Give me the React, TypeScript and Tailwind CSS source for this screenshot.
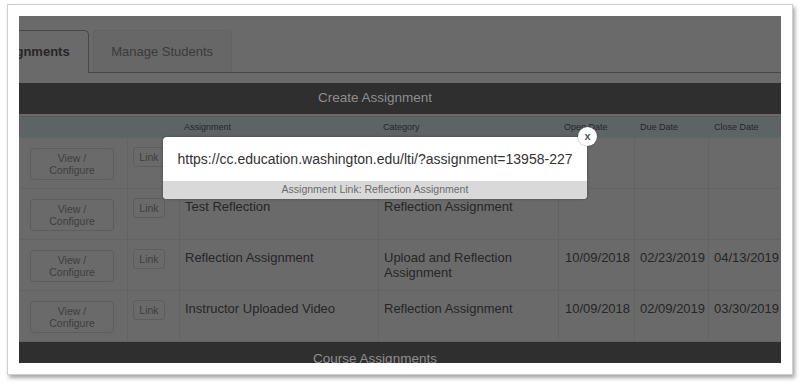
const rows = [
  { title: "", category: "", open: "", due: "", close: "" },
  { title: "Test Reflection", category: "Reflection Assignment", open: "", due: "", close: "" },
  {
    title: "Reflection Assignment",
    category: "Upload and Reflection Assignment",
    open: "10/09/2018",
    due: "02/23/2019",
    close: "04/13/2019",
  },
  {
    title: "Instructor Uploaded Video",
    category: "Reflection Assignment",
    open: "10/09/2018",
    due: "02/09/2019",
    close: "03/30/2019",
  },
];

const cols = "grid grid-cols-[109px_52px_199px_180px_76px_74px_1fr]";

export default function App() {
  return (
    <div className="w-[800px] h-[386px] bg-white overflow-hidden font-['Liberation_Sans',Arial,sans-serif]">
      <div className="ml-[7px] mt-[4px] w-[786px] h-[371px] border border-[#cfcfcf] bg-white p-[11px] shadow-[2px_3px_4px_rgba(0,0,0,0.35)]">
        <div className="relative w-[762px] h-[347px] overflow-hidden bg-[#6a6a6a]">
          {/* tabs */}
          <div className="flex items-end pt-[13px] border-b border-[#474747] h-[57px]">
            <div className="ml-[-50px] h-[43px] mb-[-1px] px-[18px] flex items-center bg-[#6a6a6a] border border-b-0 border-[#474747] rounded-tr-[5px] text-[13px] font-bold text-[#262626]">
              Assignments
            </div>
            <div className="ml-[4px] w-[139px] h-[42px] flex items-center justify-center bg-[#676767] border border-b-0 border-[#626262] rounded-t-[4px] text-[13px] text-[#3b3b3b]">
              Manage Students
            </div>
          </div>

          {/* create bar */}
          <div className="mt-[10px] h-[31px] pr-[50px] bg-[#2f2f2f] flex items-center justify-center text-[13.5px] text-[#8e8e8e]">
            Create Assignment
          </div>

          {/* table header */}
          <div className={`${cols} mt-[2px] h-[22px] bg-[#5e6464] border-t border-[#585858] text-[9px] text-[#262626] items-center`}>
            <div />
            <div />
            <div className="pl-[4px]">Assignment</div>
            <div className="pl-[4px]">Category</div>
            <div className="pl-[5px]">Open Date</div>
            <div className="pl-[5px]">Due Date</div>
            <div className="pl-[5px]">Close Date</div>
          </div>

          {/* rows */}
          {rows.map((r, i) => (
            <div key={i} className={`${cols} h-[51px] border-b border-[#636363] text-[13px] leading-[15px] text-[#262626]`}>
              <div className="border-r border-[#636363] pl-[11px] pt-[10px]">
                <div className="w-[84px] h-[32px] rounded-[3px] border border-[#5d5d5d] flex flex-col items-center justify-center text-[10.5px] leading-[12px] text-[#3e3e3e]">
                  <span>View /</span>
                  <span>Configure</span>
                </div>
              </div>
              <div className="border-r border-[#636363] pl-[5px] pt-[9px]">
                <div className="w-[32px] h-[20px] rounded-[3px] border border-[#5d5d5d] flex items-center justify-center text-[10.5px] text-[#3e3e3e]">
                  Link
                </div>
              </div>
              <div className="border-r border-[#636363] pl-[5px] pt-[10px]">{r.title}</div>
              <div className="border-r border-[#636363] pl-[5px] pt-[10px]">{r.category}</div>
              <div className="border-r border-[#636363] pl-[6px] pt-[10px] whitespace-nowrap">{r.open}</div>
              <div className="border-r border-[#636363] pl-[5px] pt-[10px] whitespace-nowrap">{r.due}</div>
              <div className="pl-[5px] pt-[10px] whitespace-nowrap">{r.close}</div>
            </div>
          ))}

          {/* course assignments bar */}
          <div className="h-[31px] pr-[50px] pt-[3px] bg-[#2f2f2f] flex items-center justify-center text-[13.5px] text-[#8e8e8e]">
            Course Assignments
          </div>

          {/* link modal */}
          <div className="absolute left-[144px] top-[121px] w-[424px] rounded-[4px] bg-white shadow-[0_0_3px_rgba(0,0,0,0.3)]">
            <div className="h-[44px] flex items-center justify-center text-[14px] text-[#333]">
              https://cc.education.washington.edu/lti/?assignment=13958-227
            </div>
            <div className="h-[18px] rounded-b-[4px] bg-[#d9d9d9] flex items-center justify-center text-[10.5px] text-[#6b6b6b]">
              Assignment Link: Reflection Assignment
            </div>
            <div className="absolute right-[-10px] top-[-10px] w-[19px] h-[19px] rounded-full bg-white shadow-[0_0_2px_rgba(0,0,0,0.4)] flex items-center justify-center text-[11px] leading-none font-bold text-[#555]">
              x
            </div>
          </div>
        </div>
      </div>
    </div>
  );
}
